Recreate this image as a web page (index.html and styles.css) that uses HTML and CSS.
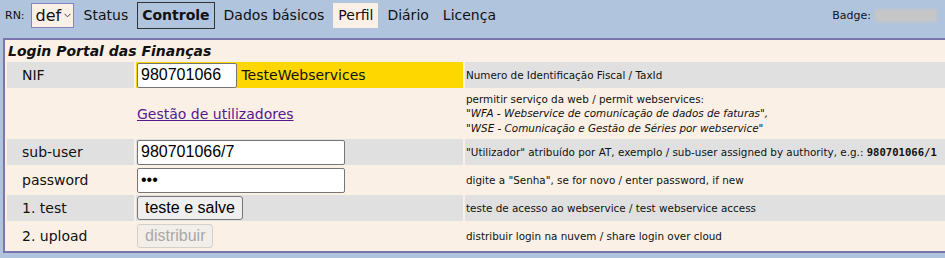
FILE: index.html
```html
<!DOCTYPE html>
<html lang="pt">
<head>
  <meta charset="UTF-8">
  <meta name="viewport" content="width=device-width, initial-scale=1.0">
  <title>Login Portal das Finanças</title>
  <link rel="stylesheet" href="styles.css">
</head>
<body>
  <!-- Barra de navegação -->
  <div class="topbar">
    <span class="rn">RN:</span>
    <div class="select">
      <span>def</span>
      <svg class="chevron" width="7" height="5" viewBox="0 0 7 5"><path d="M0.5 0.8 L3.5 3.8 L6.5 0.8" fill="none" stroke="#444" stroke-width="1"/></svg>
    </div>
    <a class="tab" href="#">Status</a>
    <a class="tab tab-selected" href="#">Controle</a>
    <a class="tab" href="#">Dados básicos</a>
    <a class="tab tab-open" href="#">Perfil</a>
    <a class="tab" href="#">Diário</a>
    <a class="tab" href="#">Licença</a>
    <div class="badge">Badge: <span class="badge-hidden"></span></div>
  </div>

  <!-- Login AT -->
  <div class="panel">
    <table class="login">
      <colgroup>
        <col class="col-label">
        <col class="col-value">
        <col class="col-desc">
      </colgroup>
      <tr class="title-row">
        <td colspan="3" class="title">Login Portal das Finanças</td>
      </tr>
      <tr class="alt">
        <td class="label">NIF</td>
        <td class="value nif"><input type="text" class="field field-short" value="980701066"> TesteWebservices</td>
        <td class="desc">Numero de Identificação Fiscal / TaxId</td>
      </tr>
      <tr class="tall">
        <td class="label"></td>
        <td class="value"><a class="users-link" href="#">Gestão de utilizadores</a></td>
        <td class="desc">permitir serviço da web / permit webservices:<br>
          <i>"WFA - Webservice de comunicação de dados de faturas",</i><br>
          <i>"WSE - Comunicação e Gestão de Séries por webservice"</i></td>
      </tr>
      <tr class="alt">
        <td class="label">sub-user</td>
        <td class="value"><input type="text" class="field" value="980701066/7"></td>
        <td class="desc">"Utilizador" atribuído por AT, exemplo / sub-user assigned by authority, e.g.: <b class="mono">980701066/1</b></td>
      </tr>
      <tr>
        <td class="label">password</td>
        <td class="value"><input type="password" class="field" value="abc"></td>
        <td class="desc">digite a "Senha", se for novo / enter password, if new</td>
      </tr>
      <tr class="alt">
        <td class="label">1. test</td>
        <td class="value"><button class="btn">teste e salve</button></td>
        <td class="desc">teste de acesso ao webservice / test webservice access</td>
      </tr>
      <tr>
        <td class="label">2. upload</td>
        <td class="value"><button class="btn" disabled>distribuir</button></td>
        <td class="desc">distribuir login na nuvem / share login over cloud</td>
      </tr>
    </table>
  </div>
</body>
</html>
```

FILE: styles.css
```css
html, body {
  overflow: hidden;
}

body {
  margin: 0;
  background: #b0c4de;
  font-family: "DejaVu Sans", Verdana, sans-serif;
  font-size: 14px;
  color: #111;
}

/* Barra de navegação */
.topbar {
  display: flex;
  align-items: center;
  height: 27px;
  padding: 2px 0 9px 5px;
}

.rn {
  font-size: 11px;
  margin-right: 6px;
}

.select {
  display: flex;
  align-items: center;
  width: 43px;
  height: 25px;
  box-sizing: border-box;
  border: 1px solid #8883c0;
  background: #faf0e6;
  padding-left: 4px;
  font-size: 16px;
  margin-right: 5px;
}

.chevron {
  margin-left: 3px;
}

.tab {
  height: 25px;
  line-height: 25px;
  padding: 0 5px;
  margin-right: 4px;
  color: #111;
  text-decoration: none;
}

.tab-selected {
  border: 1px solid #333;
  padding: 0 4px;
  font-weight: bold;
}

.tab-open {
  background: #faf0e6;
}

.badge {
  margin-left: auto;
  display: flex;
  align-items: center;
  font-size: 11px;
  padding-right: 8px;
}

.badge-hidden {
  display: inline-block;
  width: 62px;
  height: 13px;
  margin-left: 4px;
  background: #c6c6c6;
  border-radius: 3px;
  filter: blur(1.5px);
}

/* Painel de login */
.panel {
  width: 942px;
  margin-left: 3px;
  border: 2px solid #7a76ad;
  background: #faf0e6;
}

.login {
  width: 942px;
  table-layout: fixed;
  border-collapse: separate;
  border-spacing: 2px;
}

.col-label {
  width: 127px;
}

.col-value {
  width: 327px;
}

.col-desc {
  width: 480px;
}

.login td {
  height: 26px;
  padding: 0 2px;
  vertical-align: middle;
  white-space: nowrap;
}

.login .title {
  height: 18px;
  line-height: 18px;
  padding: 0 1px;
  font-weight: bold;
  font-style: italic;
}

.login .tall td {
  height: 47px;
}

.alt td {
  background: #e0e0e0;
}

.alt td.nif {
  background: #ffd700;
}

.login .label {
  padding-left: 15px;
}

.login .value {
  padding-left: 1px;
}

.login .desc {
  font-size: 10.4px;
  line-height: 14.5px;
  padding-left: 1px;
}

.mono {
  font-family: "DejaVu Sans Mono", monospace;
  font-size: 10.6px;
}

.field {
  width: 208px;
  height: 25px;
  box-sizing: border-box;
  padding: 1px 3px;
  border: 1px solid #767676;
  border-radius: 2px;
  background: #fff;
  font-family: "Liberation Sans", Arial, sans-serif;
  font-size: 16px;
  color: #000;
  vertical-align: middle;
}

.field-short {
  width: 100px;
}

.users-link {
  color: #551a8b;
}

.btn {
  height: 24px;
  padding: 0 7px;
  border: 1px solid #767676;
  border-radius: 3px;
  background: #efefef;
  font-family: "Liberation Sans", Arial, sans-serif;
  font-size: 16px;
  color: #000;
  vertical-align: middle;
}

.btn:disabled {
  border-color: #d3d0cc;
  background: #f2eeea;
  color: #a8a8a8;
}
```
